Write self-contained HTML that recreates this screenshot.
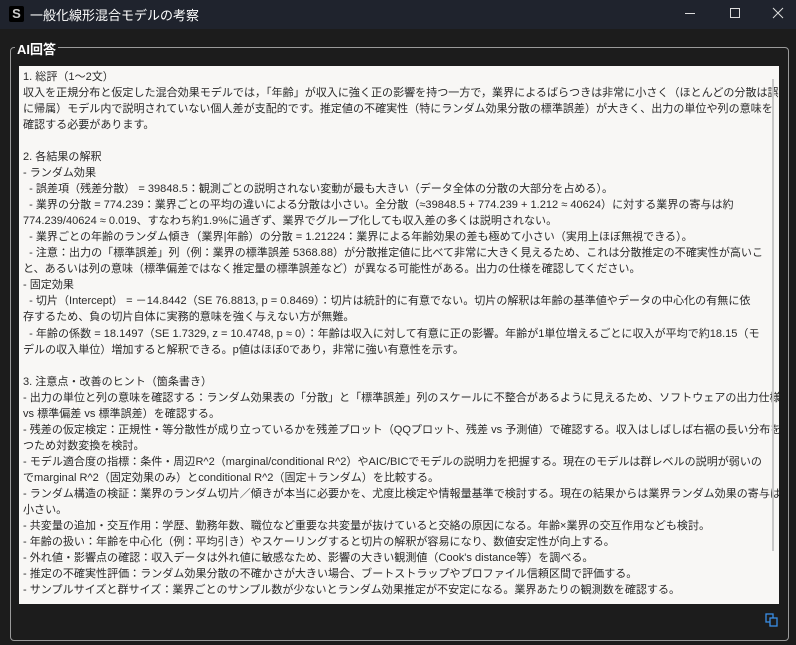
<!DOCTYPE html>
<html><head><meta charset="utf-8"><style>
*{margin:0;padding:0;box-sizing:border-box}
body{width:796px;height:645px;background:#1c1c1c;overflow:hidden;font-family:"Liberation Sans","Noto Sans CJK JP",sans-serif;position:relative}
.tb{position:absolute;left:0;top:0;width:796px;height:29px;background:#1f232d;color:#fff}
.ic{position:absolute;left:9px;top:6px;width:15px;height:16px;background:#000;border-radius:2px;color:#ccc;font-size:13px;font-weight:bold;text-align:center;line-height:16px}
.tt{position:absolute;left:30px;top:5px;font-size:13px;color:#fff}
.ctl{position:absolute;top:0;height:29px;color:#ddd}
.gb{position:absolute;left:10px;top:47px;width:779px;height:594px;border:1px solid #9a9a9a;border-radius:4px}
.lab{position:absolute;left:15px;top:39px;background:#1c1c1c;color:#fff;font-size:13px;padding:0 2px;font-weight:bold}
.ta{position:absolute;left:19px;top:66px;width:760px;height:538px;background:#f8f7f5;overflow:hidden}
.sb{position:absolute;left:753px;top:13px;width:2px;height:472px;background:#c8c8c8;z-index:2}
.tx{position:absolute;left:4px;top:3px;font-size:11.05px;line-height:16.03px;color:#2a2a2a;white-space:pre}
</style></head><body>
<div class="tb"><div class="ic">S</div><div class="tt">一般化線形混合モデルの考察</div>
<svg class="ctl" style="left:670px" width="126" height="29"><line x1="15" y1="13.5" x2="25" y2="13.5" stroke="#ddd"/><rect x="60.5" y="8.5" width="9" height="9" fill="none" stroke="#ddd"/><path d="M103 8l10 10M113 8l-10 10" stroke="#ddd"/></svg></div>
<div class="gb"></div><div class="lab">AI回答</div>
<div class="ta"><div class="sb"></div><div class="tx">1. 総評（1〜2文）
収入を正規分布と仮定した混合効果モデルでは，「年齢」が収入に強く正の影響を持つ一方で，業界によるばらつきは非常に小さく（ほとんどの分散は誤差
に帰属）モデル内で説明されていない個人差が支配的です。推定値の不確実性（特にランダム効果分散の標準誤差）が大きく、出力の単位や列の意味を
確認する必要があります。

2. 各結果の解釈
- ランダム効果
  - 誤差項（残差分散） = 39848.5：観測ごとの説明されない変動が最も大きい（データ全体の分散の大部分を占める）。
  - 業界の分散 = 774.239：業界ごとの平均の違いによる分散は小さい。全分散（≈39848.5 + 774.239 + 1.212 ≈ 40624）に対する業界の寄与は約
774.239/40624 ≈ 0.019、すなわち約1.9%に過ぎず、業界でグループ化しても収入差の多くは説明されない。
  - 業界ごとの年齢のランダム傾き（業界|年齢）の分散 = 1.21224：業界による年齢効果の差も極めて小さい（実用上ほぼ無視できる）。
  - 注意：出力の「標準誤差」列（例：業界の標準誤差 5368.88）が分散推定値に比べて非常に大きく見えるため、これは分散推定の不確実性が高いこ
と、あるいは列の意味（標準偏差ではなく推定量の標準誤差など）が異なる可能性がある。出力の仕様を確認してください。
- 固定効果
  - 切片（Intercept） = －14.8442（SE 76.8813, p = 0.8469）：切片は統計的に有意でない。切片の解釈は年齢の基準値やデータの中心化の有無に依
存するため、負の切片自体に実務的意味を強く与えない方が無難。
  - 年齢の係数 = 18.1497（SE 1.7329, z = 10.4748, p ≈ 0）：年齢は収入に対して有意に正の影響。年齢が1単位増えるごとに収入が平均で約18.15（モ
デルの収入単位）増加すると解釈できる。p値はほぼ0であり，非常に強い有意性を示す。

3. 注意点・改善のヒント（箇条書き）
- 出力の単位と列の意味を確認する：ランダム効果表の「分散」と「標準誤差」列のスケールに不整合があるように見えるため、ソフトウェアの出力仕様（分散
vs 標準偏差 vs 標準誤差）を確認する。
- 残差の仮定検定：正規性・等分散性が成り立っているかを残差プロット（QQプロット、残差 vs 予測値）で確認する。収入はしばしば右裾の長い分布を持
つため対数変換を検討。
- モデル適合度の指標：条件・周辺R^2（marginal/conditional R^2）やAIC/BICでモデルの説明力を把握する。現在のモデルは群レベルの説明が弱いの
でmarginal R^2（固定効果のみ）とconditional R^2（固定＋ランダム）を比較する。
- ランダム構造の検証：業界のランダム切片／傾きが本当に必要かを、尤度比検定や情報量基準で検討する。現在の結果からは業界ランダム効果の寄与は
小さい。
- 共変量の追加・交互作用：学歴、勤務年数、職位など重要な共変量が抜けていると交絡の原因になる。年齢×業界の交互作用なども検討。
- 年齢の扱い：年齢を中心化（例：平均引き）やスケーリングすると切片の解釈が容易になり、数値安定性が向上する。
- 外れ値・影響点の確認：収入データは外れ値に敏感なため、影響の大きい観測値（Cook's distance等）を調べる。
- 推定の不確実性評価：ランダム効果分散の不確かさが大きい場合、ブートストラップやプロファイル信頼区間で評価する。
- サンプルサイズと群サイズ：業界ごとのサンプル数が少ないとランダム効果推定が不安定になる。業界あたりの観測数を確認する。</div></div>
<svg style="position:absolute;left:765px;top:613px" width="14" height="14"><rect x="1" y="1" width="7" height="8" fill="none" stroke="#3a8ee6" stroke-width="1.3"/><rect x="5" y="5" width="7" height="8" fill="#1c1c1c" stroke="#3a8ee6" stroke-width="1.3"/></svg>
</body></html>
